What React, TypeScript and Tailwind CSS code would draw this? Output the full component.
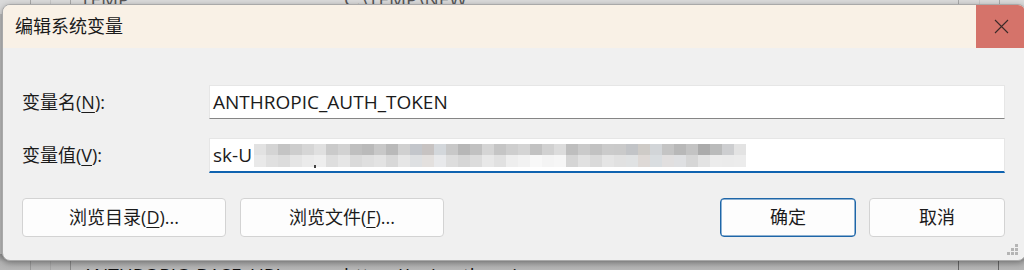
import React from 'react';

const FONT = '"Open Sans", "Noto Sans CJK SC", sans-serif';

// pixel blocks that stand in for the blurred secret
const topRow = [
  '#e2e2e2', '#d4d4d4', '#c4c4c4', '#cdcdcd', '#d6d6d6', '#e0e0e0', '#cacaca', '#d2d2d2', '#bfbfbf', '#bababa',
  '#c8c8c8', '#b9b9b9', '#d0d0d0', '#c3c6cb', '#c7c3c2', '#d3d7db', '#c8c8c8', '#b7b7b7', '#c1c1c1', '#d5d5d5',
  '#c5c5c5', '#cecece', '#d4d4d4', '#c2c2c2', '#d1d1d1', '#dcdcdc', '#bebebe', '#cacaca', '#c2c2c2', '#cbcbcb',
  '#cacaca', '#c2c4c7', '#cecbc7', '#d2d5d8', '#c4c4c4', '#b8b8b8', '#c3c3c3', '#ababab', '#babbbb', '#cdced0', '#e3e3e3',
];
const botRow = [
  '#e9e9e9', '#e0e0e0', '#dcdcdc', '#e5e5e5', '#ebebeb', '#eeeeee', '#dedede', '#e6e6e6', '#dadada', '#dfdfdf',
  '#e3e3e3', '#d8d8d8', '#e6e6e6', '#dee0e2', '#e3e0de', '#e8e9eb', '#dddddd', '#d6d6d6', '#dcdcdc', '#e8e8e8',
  '#e1e1e1', '#eeeeee', '#f2f2f2', '#f8f8f8', '#f4f4f4', '#f6f6f6', '#d5d5d5', '#e1e1e1', '#dadada', '#e5e5e5',
  '#e1e1e1', '#e0e2e3', '#ded9d6', '#d9dde0', '#e1dfdf', '#dfe0e2', '#d6d6d6', '#e3e3e3', '#ececec', '#ebebeb', '#ececec',
];

const Underlined = ({ children }: { children: React.ReactNode }) => (
  <span className="underline underline-offset-[3px] decoration-1">{children}</span>
);

const DialogButton = ({
  children,
  primary,
  width,
}: {
  children: React.ReactNode;
  primary?: boolean;
  width: string;
}) => (
  <button
    type="button"
    className={`${width} h-[39px] rounded-[4px] bg-[#fdfdfd] text-[18px] text-[#1b1b1b] flex items-center justify-center ${
      primary ? 'border border-[#1e66a8] shadow-[inset_0_0_0_0.5px_#1e66a8]' : 'border border-[#d3d3d3]'
    }`}
  >
    {children}
  </button>
);

const App: React.FC = () => {
  return (
    <div className="relative w-[1024px] h-[270px] overflow-hidden bg-[#bdbdbd]" style={{ fontFamily: FONT }}>
      {/* window behind the dialog */}
      <div className="absolute inset-x-0 top-0 h-[14px] bg-[#dadada]">
        <div className="absolute left-[30px] top-0 h-full w-px bg-[#a8a8a8]" />
        <div className="absolute left-[50px] top-0 h-full w-px bg-[#c8c8c8]" />
        <div className="absolute left-[70px] top-0 h-full w-px bg-[#a8a8a8]" />
        <div className="absolute left-[958px] top-0 h-full w-px bg-[#a8a8a8]" />
        <div className="absolute left-[979px] top-0 h-full w-px bg-[#c8c8c8]" />
        <div className="absolute left-[999px] top-0 h-full w-px bg-[#a8a8a8]" />
        <span className="absolute left-[80px] top-[-13px] text-[19px] leading-[24px] text-[#555]">TEMP</span>
        <span className="absolute left-[344px] top-[-13px] text-[19px] leading-[24px] text-[#555]">C:\TEMP\NEW</span>
      </div>
      <div className="absolute inset-x-0 bottom-0 h-[16px] bg-gradient-to-b from-[#8e8e8e] via-[#b2b2b2] to-[#b6b6b6]">
        <div className="absolute left-[30px] top-0 h-full w-px bg-[#999]" />
        <div className="absolute left-[50px] top-0 h-full w-px bg-[#a6a6a6]" />
        <div className="absolute left-[70px] top-0 h-full w-px bg-[#888]" />
        <div className="absolute left-[958px] top-0 h-full w-px bg-[#666]" />
        <div className="absolute left-[998px] top-0 h-full w-px bg-[#666]" />
        <span className="absolute left-[82px] top-[9px] text-[19px] leading-[24px] text-[#111]">ANTHROPIC_BASE_URL</span>
        <span className="absolute left-[344px] top-[9px] text-[19px] leading-[24px] text-[#111]">https://api.anthropic.com</span>
      </div>

      {/* the dialog window */}
      <div className="absolute left-[2px] top-[4px] w-[1024px] h-[257px] rounded-[8px] overflow-hidden border border-[#a9a9a9] bg-[#f0f0f0] shadow-[0_2px_6px_rgba(0,0,0,0.35)] flex flex-col">
        <div className="h-[43px] flex items-stretch bg-[#f9f1e6]">
          <div className="flex-1 flex items-center pl-[12px] text-[18px] text-[#1a1a1a]">编辑系统变量</div>
          <div className="w-[49px] bg-[#d5736a] flex items-center justify-center">
            <svg width="15" height="15" viewBox="0 0 15 15" className="ml-[1px]">
              <path d="M1 1 L14 14 M14 1 L1 14" stroke="#3b2a28" strokeWidth="1.1" fill="none" />
            </svg>
          </div>
        </div>

        <div className="flex-1 flex flex-col pl-[19px] pr-[20px] pt-[37px] text-[18px] text-[#1b1b1b]">
          <div className="flex items-center h-[34px]">
            <div className="w-[187px]">
              变量名(<Underlined>N</Underlined>):
            </div>
            <div className="flex-1 h-[34px] bg-white border border-[#e6e6e6] border-b-[#858585] flex items-center pl-[3px] text-[19px]">
              ANTHROPIC_AUTH_TOKEN
            </div>
          </div>

          <div className="flex items-center h-[35px] mt-[19px]">
            <div className="w-[187px]">
              变量值(<Underlined>V</Underlined>):
            </div>
            <div className="relative flex-1 h-[35px] bg-white border border-[#e6e6e6] border-b-2 border-b-[#0f63b0] flex items-center pl-[3px] text-[19px]">
              <span>sk-U</span>
              <div className="ml-[2px] flex flex-col">
                <div className="flex">
                  {topRow.map((c, i) => (
                    <div key={i} className="w-[12px] h-[11px]" style={{ backgroundColor: c }} />
                  ))}
                </div>
                <div className="flex">
                  {botRow.map((c, i) => (
                    <div key={i} className="w-[12px] h-[12px]" style={{ backgroundColor: c }} />
                  ))}
                </div>
              </div>
              <span className="absolute left-[104px] bottom-[3px] w-[2px] h-[3px] bg-[#444]" />
            </div>
          </div>

          <div className="flex items-center mt-[25px]">
            <DialogButton width="w-[204px]">
              浏览目录(<Underlined>D</Underlined>)...
            </DialogButton>
            <div className="ml-[14px]">
              <DialogButton width="w-[204px]">
                浏览文件(<Underlined>F</Underlined>)...
              </DialogButton>
            </div>
            <div className="flex-1" />
            <DialogButton width="w-[136px]" primary>
              确定
            </DialogButton>
            <div className="ml-[13px]">
              <DialogButton width="w-[136px]">取消</DialogButton>
            </div>
          </div>
        </div>

        {/* resize grip */}
        <svg width="12" height="12" viewBox="0 0 12 12" className="absolute right-[6px] bottom-[4px]">
          <rect x="8" y="0" width="3" height="3" fill="#b5b5b5" />
          <rect x="4" y="4" width="3" height="3" fill="#b5b5b5" />
          <rect x="8" y="4" width="3" height="3" fill="#b5b5b5" />
          <rect x="0" y="8" width="3" height="3" fill="#b5b5b5" />
          <rect x="4" y="8" width="3" height="3" fill="#b5b5b5" />
          <rect x="8" y="8" width="3" height="3" fill="#b5b5b5" />
        </svg>
      </div>
    </div>
  );
};

export default App;
